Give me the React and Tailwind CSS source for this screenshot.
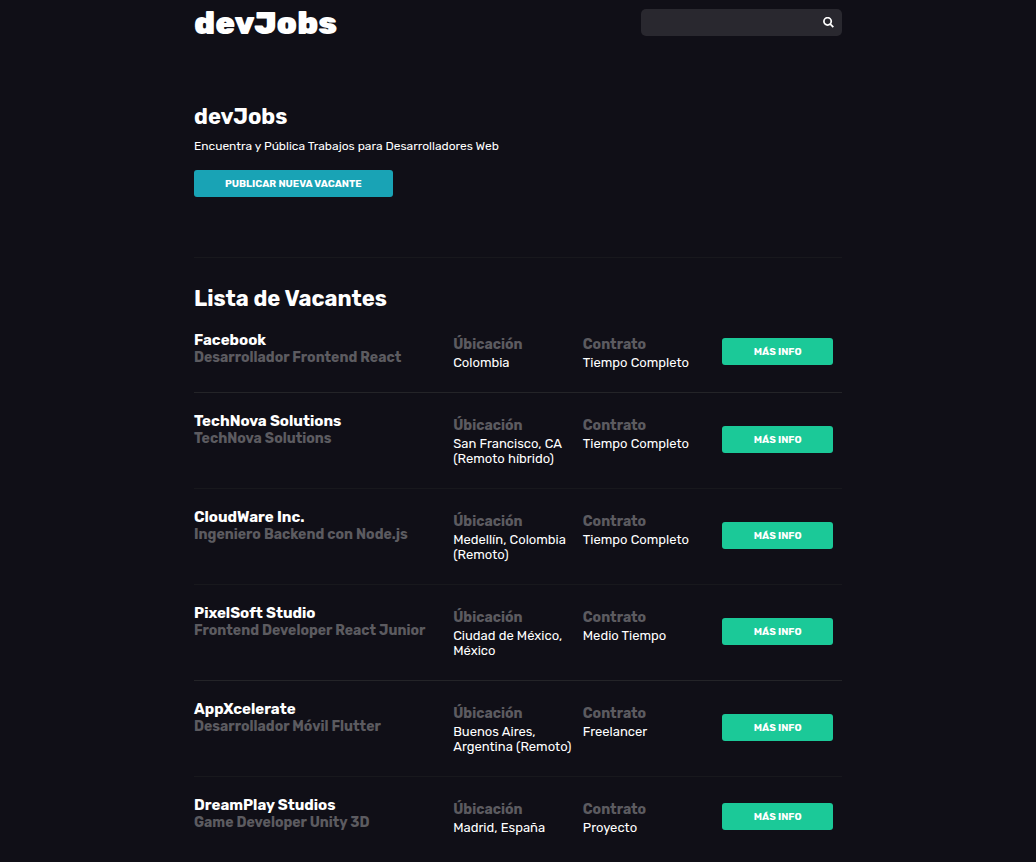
const vacantes = [
  { empresa: 'Facebook', titulo: 'Desarrollador Frontend React', ubicacion: 'Colombia', contrato: 'Tiempo Completo', linea: 'border-[#242428]' },
  { empresa: 'TechNova Solutions', titulo: 'TechNova Solutions', ubicacion: 'San Francisco, CA (Remoto híbrido)', contrato: 'Tiempo Completo', linea: 'border-[#18181d]' },
  { empresa: 'CloudWare Inc.', titulo: 'Ingeniero Backend con Node.js', ubicacion: 'Medellín, Colombia (Remoto)', contrato: 'Tiempo Completo', linea: 'border-[#18181d]' },
  { empresa: 'PixelSoft Studio', titulo: 'Frontend Developer React Junior', ubicacion: 'Ciudad de México, México', contrato: 'Medio Tiempo', linea: 'border-[#242428]' },
  { empresa: 'AppXcelerate', titulo: 'Desarrollador Móvil Flutter', ubicacion: 'Buenos Aires, Argentina (Remoto)', contrato: 'Freelancer', linea: 'border-[#18181d]' },
  { empresa: 'DreamPlay Studios', titulo: 'Game Developer Unity 3D', ubicacion: 'Madrid, España', contrato: 'Proyecto', linea: 'border-transparent' },
];

function Header() {
  return (
    <header className="flex h-[45px] items-center justify-between">
      <a href="#inicio" className="text-[32px] leading-[44px] font-black">devJobs</a>
      <form role="search" className="flex h-[27px] w-[201px] items-center rounded-[5px] bg-[#29282f]">
        <input type="text" aria-label="Buscar vacantes" className="h-full min-w-0 flex-1 bg-transparent px-2 text-[13px] outline-none" />
        <button type="submit" aria-label="Buscar" className="flex h-full items-center px-2">
          <svg viewBox="0 0 24 24" className="size-[11px]" fill="none" stroke="currentColor" strokeWidth="3.8">
            <circle cx="10" cy="9.5" r="8" />
            <path d="M15.5 15L22.5 22" />
          </svg>
        </button>
      </form>
    </header>
  );
}

function Dato({ etiqueta, valor }) {
  return (
    <div className="mt-1">
      <p className="text-[14px] leading-[17px] font-bold text-[#5c5b60]">{etiqueta}</p>
      <p className="mt-[2px] text-[13px] leading-[15px]">{valor}</p>
    </div>
  );
}

function Vacante({ vacante }) {
  return (
    <li className={`grid grid-cols-[2fr_1fr_1fr_1fr] border-b pt-5 pb-[22px] ${vacante.linea}`}>
      <div className="font-bold">
        <h3 className="text-[15px] leading-[17px]">{vacante.empresa}</h3>
        <p className="text-[14px] leading-[17px] text-[#5c5b60]">{vacante.titulo}</p>
      </div>
      <Dato etiqueta="Úbicación" valor={vacante.ubicacion} />
      <Dato etiqueta="Contrato" valor={vacante.contrato} />
      <a href="#vacante" className="mr-[9px] ml-[10px] self-center rounded-[3px] bg-[#1bc998] pt-px text-center text-[10px] leading-[26px] font-bold uppercase">
        Más info
      </a>
    </li>
  );
}

export default function App() {
  return (
    <div className="min-h-screen bg-[#100f17] font-['Rubik','Roboto',sans-serif] text-white">
      <div className="mx-auto w-[90%] max-w-[648px]">
        <Header />
        <main>
          <section className="border-b border-[#18181d] pt-[59px] pb-[60px]">
            <h1 className="text-[22px] leading-[26px] font-bold">devJobs</h1>
            <p className="mt-2 text-[12px] leading-[16px]">Encuentra y Pública Trabajos para Desarrolladores Web</p>
            <a href="#nueva-vacante" className="mt-4 inline-block rounded-[3px] bg-[#19a3b5] px-[31px] pt-px align-top text-[10px] leading-[26px] font-bold uppercase">
              Publicar nueva vacante
            </a>
          </section>
          <section>
            <h2 className="pt-[28px] text-[22px] leading-[26px] font-bold">Lista de Vacantes</h2>
            <ul>
              {vacantes.map((v) => <Vacante key={v.empresa} vacante={v} />)}
            </ul>
          </section>
        </main>
      </div>
    </div>
  );
}
